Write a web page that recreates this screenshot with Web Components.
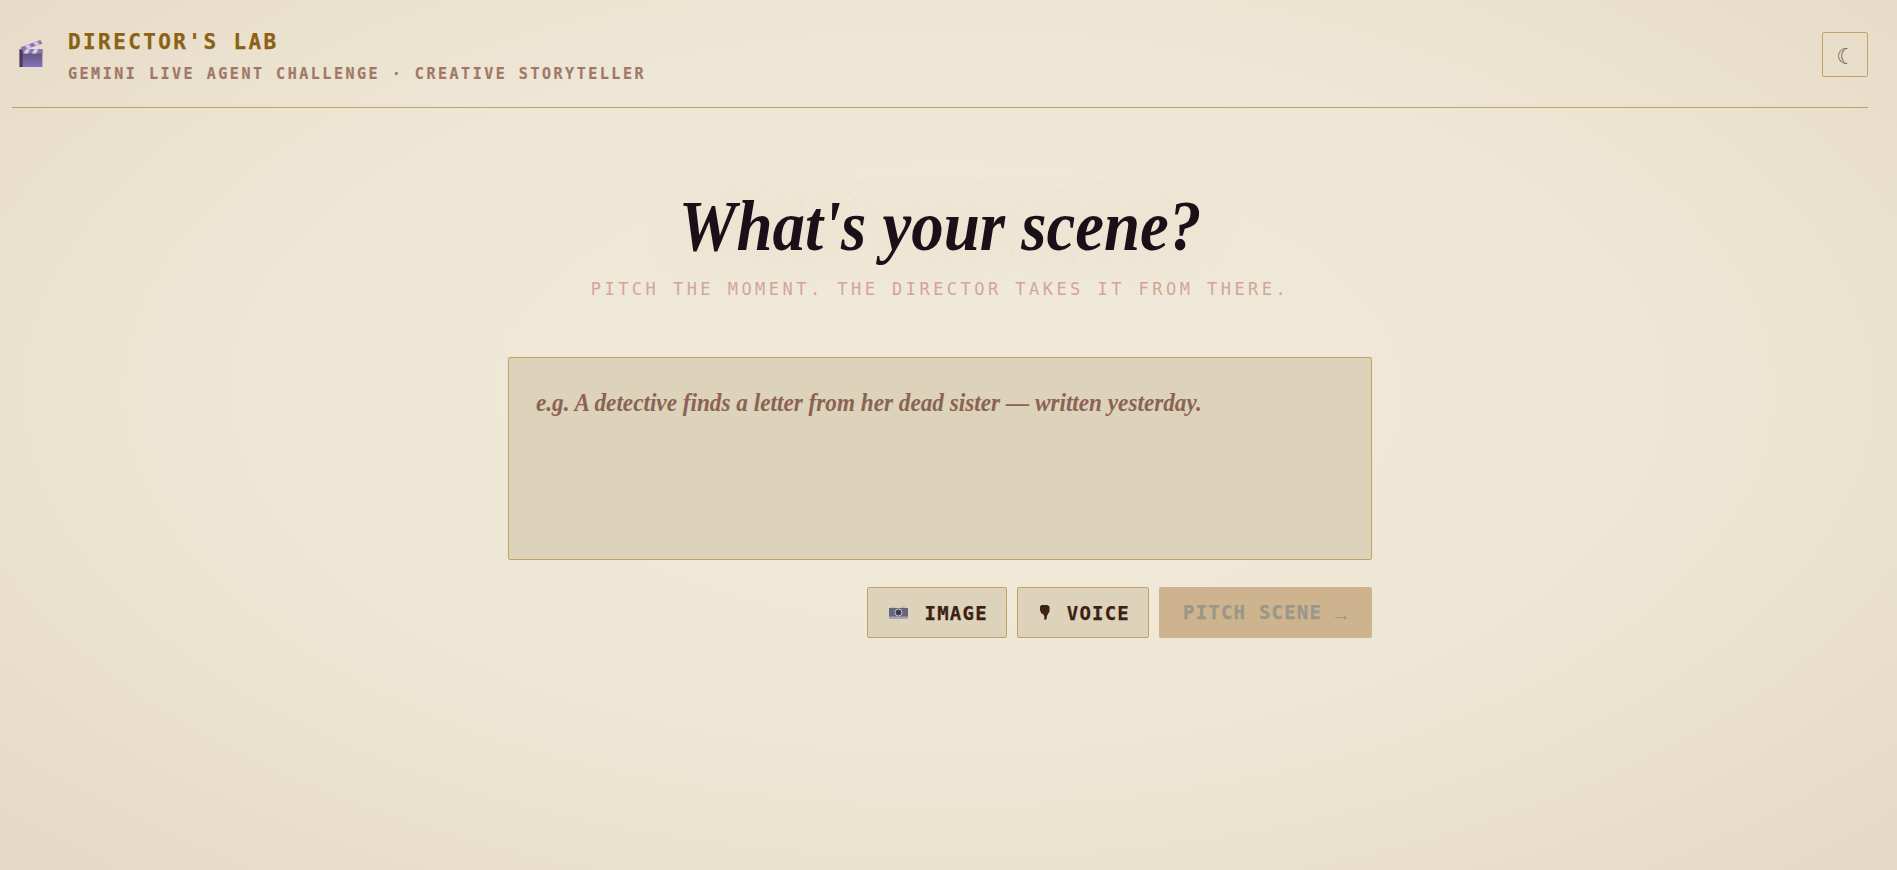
<!DOCTYPE html>
<html><head><meta charset="utf-8"><title>Director's Lab</title>
<style>
html,body{margin:0;height:100%}
body{min-height:870px;overflow:hidden;background:radial-gradient(ellipse at 50% 45%,#f1e9d9 0%,#efe7d6 50%,#e4d9c4 100%);font-family:"DejaVu Sans Mono",monospace}
</style></head><body>
<lab-app></lab-app>
<template id="t-app"><style>
:host{display:flex;flex-direction:column;padding:0 29px 0 12px;height:870px;box-sizing:border-box}
main{display:flex;flex-direction:column;align-items:center}
</style><lab-header></lab-header><main><lab-hero></lab-hero><lab-pitch></lab-pitch></main></template>

<template id="t-header"><style>
:host{display:flex;align-items:center;justify-content:space-between;height:108px;box-sizing:border-box;border-bottom:1px solid #c4a265}
.l{display:flex;align-items:center;gap:25px;padding-left:7px}
.x{padding-top:5px}
.t{font:700 21px/26px "DejaVu Sans Mono",monospace;letter-spacing:2.4px;color:#8b6114;-webkit-text-stroke:.25px #8b6114}
.s{font:700 15px/20px "DejaVu Sans Mono",monospace;letter-spacing:2.53px;color:#a07868;margin-top:9px;-webkit-text-stroke:.2px #a07868}
button{width:46px;height:45px;margin-top:2px;box-sizing:border-box;background:transparent;border:1px solid #c4a265;border-radius:2px;color:#80694e;font:22px/43px "DejaVu Sans",sans-serif;padding:2px 0 0 2px}
svg{display:block}
</style><div class="l"><svg width="24" height="27" viewBox="0 0 22 26"><defs><linearGradient id="g" x1="0" y1="0" x2="0" y2="1"><stop offset="0" stop-color="#5f4c72"/><stop offset="1" stop-color="#8272bc"/></linearGradient></defs><rect y="9" width="22" height="17" fill="url(#g)"/><rect y="9" width="3" height="17" fill="#4a3a58"/><rect x="3" y="9" width="19" height="4" fill="#8a76b4"/><path d="M6 9h4l-2 4H4zM14 9h4l-2 4h-4z" fill="#d8d0e6"/><path d="M1 7 20 0l2 3.500L2 10z" fill="#8d72b8"/><path d="M5 5.500 9 4l2.500 3.200-4 1.400zM13 2.600 17 1.100l2.500 3.200-4 1.400z" fill="#cfc6e2"/></svg>
<div class="x"><div class="t">DIRECTOR'S LAB</div><div class="s">GEMINI LIVE AGENT CHALLENGE · CREATIVE STORYTELLER</div></div></div>
<button aria-label="Toggle theme">☾</button></template>

<template id="t-hero"><style>
:host{display:block;text-align:center;padding-top:81px}
h1{margin:0;font:italic 700 72px/74px "Liberation Serif",serif;color:#1a1018;text-shadow:0 0 40px rgba(232,220,198,.7)}
h1 span{display:inline-block;transform:scaleX(.901)}
p{margin:16px 0 1px;font:400 17px/20px "DejaVu Sans Mono",monospace;letter-spacing:3.46px;color:#d0a698}
</style><h1><span>What's your scene?</span></h1><p>PITCH THE MOMENT. THE DIRECTOR TAKES IT FROM THERE.</p></template>

<template id="t-pitch"><style>
:host{display:block;width:864px;margin-top:57px}
.box{height:203px;box-sizing:border-box;background:#ddd2ba;border:1px solid #c4a265;border-radius:2px;padding:28px 27px 27px;font:italic 700 26px/34px "Liberation Serif",serif;color:#8b6355;outline:none;white-space:nowrap}
.box span{display:inline-block;transform:scaleX(.893);transform-origin:0 50%}
.row{display:flex;justify-content:flex-end;gap:10px;margin-top:27px}
.v{--gap:16px}
</style><div class="box" role="textbox" contenteditable="true"><span>e.g. A detective finds a letter from her dead sister — written yesterday.</span></div>
<div class="row"><lab-btn><svg slot="icon" width="19" height="13" viewBox="0 0 19 13"><rect y="2" width="19" height="9" fill="#66667a"/><rect y="10.500" width="19" height="2.500" fill="#a9a2bc"/><rect x="2" y="1" width="4" height="1" fill="#bbb"/><rect x="12" y="0" width="4" height="2" fill="#c0bcc4"/><circle cx="9.500" cy="6.500" r="3.500" fill="#3d3d50" stroke="#c9c9d4"/></svg>IMAGE</lab-btn>
<lab-btn class="v"><svg slot="icon" width="12" height="15" viewBox="0 0 12 15"><path d="M2.500 0h6L10.500 1.500V6.500L9 9 8 11l-.5 3-1 1-1.500-1 .5-2-1-2.500-2.500-1.500L1 5V1.500z" fill="#3d2218"/></svg>VOICE</lab-btn>
<lab-cta>PITCH SCENE <i>→</i></lab-cta></div></template>

<template id="t-btn"><style>
:host{display:inline-block}
button{display:flex;align-items:center;gap:var(--gap,17px);height:51px;box-sizing:border-box;padding:0 18px 0 21px;background:#ddd2ba;border:1px solid #c4a265;border-radius:2px;color:#3d1f14;font:700 19px "DejaVu Sans Mono",monospace;letter-spacing:1.2px;-webkit-text-stroke:.25px #3d1f14}
</style><button><slot name="icon"></slot><slot></slot></button></template>

<template id="t-cta"><style>
:host{display:inline-block}
button{height:51px;width:213px;box-sizing:border-box;background:#cdb48e;border:0;border-radius:2px;color:#9b9688;font:700 19px/47px "DejaVu Sans Mono",monospace;letter-spacing:1.2px;padding:0 0 1px;text-align:center;-webkit-text-stroke:.25px #9b9688}
::slotted(i){font:400 20px "Liberation Mono",monospace;-webkit-text-stroke:0;vertical-align:-2px}
</style><button disabled><slot></slot></button></template>

<script>
const def=(n,t)=>customElements.define(n,class extends HTMLElement{constructor(){super();this.attachShadow({mode:"open"}).append(document.getElementById(t).content.cloneNode(true))}});
def("lab-btn","t-btn");def("lab-cta","t-cta");def("lab-header","t-header");def("lab-hero","t-hero");def("lab-pitch","t-pitch");def("lab-app","t-app");
</script>
</body></html>
